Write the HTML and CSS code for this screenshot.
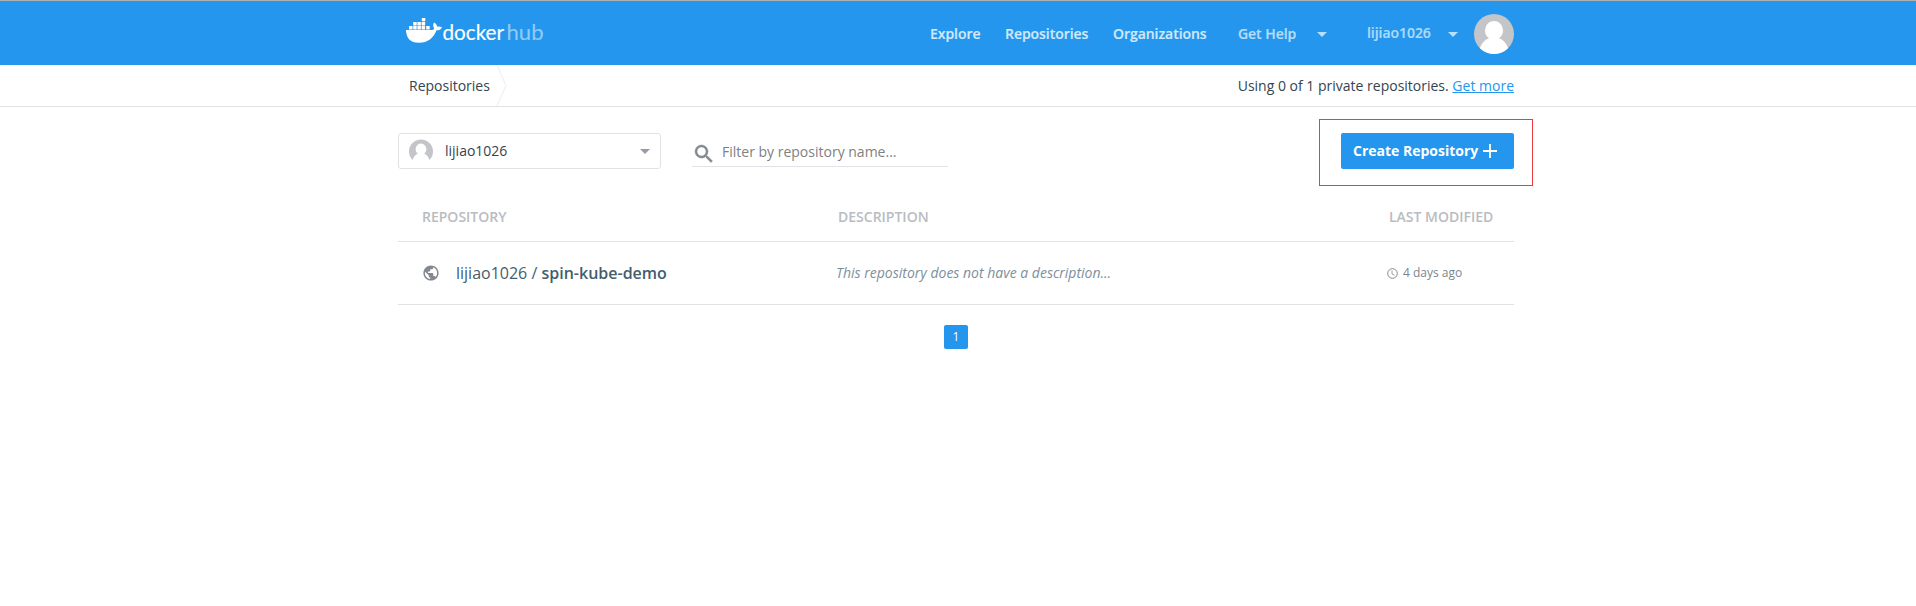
FILE: index.html
```html
<!DOCTYPE html>
<html lang="en">
<head>
<meta charset="utf-8">
<title>Docker Hub</title>
<link rel="stylesheet" href="styles.css">
</head>
<body>
<header class="topbar">
  <div class="container topbar-inner">
    <svg class="logo" width="140" height="32" viewBox="0 0 140 32">
      <g fill="#fff">
        <path d="M0 13H26C27.800 13 28 12 28 11C26.800 9 27 7 28 5.500C29.800 6.500 31 8 31.200 9.700C33 9.400 34.800 9.600 36 10.200C35 12.500 33 13.300 30.500 13.300C27.500 21 22 25.800 13 25.800C4 25.800 .3 21 0 13Z"/>
        <path d="M3 9h3.500v3.500H3zM7.200 9h3.500v3.500H7.200zM11.400 9h3.500v3.500h-3.500zM15.600 9h3.500v3.500h-3.500zM20.200 9h3.500v3.500h-3.500zM7.200 5h3.500v3.500H7.200zM11.400 5h3.500v3.500h-3.500zM15.600 5h3.500v3.500h-3.500zM15.800 1h3.500v3.300h-3.500z"/>
      </g>
      <text class="wordmark" x="36.500" y="23" textLength="61.500" lengthAdjust="spacingAndGlyphs">docker</text>
      <text class="wordmark wordmark-hub" x="100.500" y="23" textLength="37" lengthAdjust="spacingAndGlyphs">hub</text>
    </svg>
    <nav class="nav">
      <a class="nav-explore">Explore</a>
      <a class="nav-repos">Repositories</a>
      <a class="nav-orgs">Organizations</a>
      <a class="nav-help">Get Help</a>
      <svg class="caret" width="10" height="5" viewBox="0 0 10 5"><path d="M0 0h10L5 5z" fill="currentColor"/></svg>
      <a class="nav-user">lijiao1026</a>
      <svg class="caret" width="10" height="5" viewBox="0 0 10 5"><path d="M0 0h10L5 5z" fill="currentColor"/></svg>
      <svg class="avatar" width="40" height="40" viewBox="0 0 40 40">
        <circle cx="20" cy="20" r="20" fill="#c3c5c9"/>
        <path d="M20 7a9 9.500 0 0 1 5 17.300c4.500 1.500 7.800 5.500 9 10A20 20 0 0 1 6 34.300c1.200-4.500 4.500-8.500 9-10A9 9.500 0 0 1 20 7z" fill="#fff"/>
      </svg>
    </nav>
  </div>
</header>
<div class="subbar">
  <div class="container subbar-inner">
    <div class="crumb">Repositories
      <svg width="12" height="41" viewBox="0 0 12 41"><path d="M1 0L10 20.500L1 41" fill="none" stroke="#ebecee"/></svg>
    </div>
    <div class="usage">Using 0 of 1 private repositories. <a class="more">Get more</a></div>
  </div>
</div>
<main class="container">
  <div class="tools">
    <div class="select">
      <svg width="24" height="24" viewBox="0 0 24 24"><path d="M3.500 21A12 12 0 1 1 20.500 21C19.500 18 18 16 15.200 14.800A5.400 5.700 0 1 0 8.800 14.800C6 16 4.500 18 3.500 21z" fill="#c3c5c9"/></svg>
      <span class="select-name">lijiao1026</span>
      <svg width="10" height="5" viewBox="0 0 10 5"><path d="M0 0h10L5 5z" fill="#9a9ba9"/></svg>
    </div>
    <div class="search">
      <svg width="24" height="24" viewBox="0 0 24 24"><path fill="#84888f" stroke="#84888f" stroke-width=".5" d="M15.500 14h-.79l-.28-.27A6.470 6.470 0 0 0 16 9.500 6.500 6.500 0 1 0 9.500 16c1.610 0 3.090-.59 4.230-1.570l.27.28v.79l5 4.990L20.490 19l-4.990-5zm-6 0C7.010 14 5 11.990 5 9.500S7.010 5 9.500 5 14 7.010 14 9.500 11.990 14 9.500 14z"/></svg>
      <span>Filter by repository name...</span>
    </div>
    <div class="highlight">
      <button class="create">Create Repository <svg width="14" height="14" viewBox="0 0 14 14"><path d="M7 0v14M0 7h14" stroke="#fff" stroke-width="1.800"/></svg></button>
    </div>
  </div>
  <div class="row head">
    <div class="c-repo">REPOSITORY</div>
    <div class="c-desc">DESCRIPTION</div>
    <div class="c-date">LAST MODIFIED</div>
  </div>
  <div class="row item">
    <div class="c-repo">
      <svg width="16" height="16" viewBox="1.500 1.500 21 21"><path fill="#84888f" d="M12 2C6.480 2 2 6.480 2 12s4.480 10 10 10 10-4.480 10-10S17.520 2 12 2zm-1 17.930c-3.950-.49-7-3.850-7-7.930 0-.62.080-1.210.21-1.790L9 15v1c0 1.100.9 2 2 2v1.930zm6.900-2.540c-.26-.81-1-1.390-1.900-1.390h-1v-3c0-.55-.45-1-1-1H8v-2h2c.55 0 1-.45 1-1V7h2c1.100 0 2-.9 2-2v-.41c2.930 1.190 5 4.060 5 7.410 0 2.080-.8 3.970-2.100 5.390z"/></svg>
      <span class="repo-name">lijiao1026 / <b>spin-kube-demo</b></span>
    </div>
    <div class="c-desc">This repository does not have a description...</div>
    <div class="c-date">
      <svg width="11" height="11" viewBox="0 0 11 11" fill="none" stroke="#84888f"><circle cx="5.500" cy="5.500" r="4.800"/><path d="M5 2.500V6L7.500 7.200" stroke-width=".8"/></svg>
      <span>4 days ago</span>
    </div>
  </div>
  <div class="pager"><span class="page">1</span></div>
</main>
</body>
</html>
```
FILE: styles.css
```css
* { box-sizing: border-box; }
body { margin: 0; background: #fff; font: 14px/20px "Open Sans", "Noto Sans", sans-serif; color: #33444f; }
svg { display: block; flex: none; }
.container { width: 1116px; margin-left: 398px; }
.topbar { height: 65px; background: #2496ed; border-top: 1px solid #aab0b6; }
.topbar-inner { display: flex; justify-content: space-between; height: 64px; }
.logo { margin: 16px 0 0 8px; }
.wordmark { font: 400 21.5px Lato, sans-serif; fill: #fff; stroke: #fff; stroke-width: .15px; }
.wordmark-hub { fill: #90caf6; stroke: #90caf6; }
.nav { display: flex; align-items: center; height: 66px; font-weight: 600; color: #cfe8fc; white-space: nowrap; -webkit-text-stroke: .2px currentColor; letter-spacing: -.05px; }
.nav-explore { width: 75px; }
.nav-repos { width: 108px; }
.nav-orgs { width: 125px; }
.nav-help { width: 79px; color: #b6ddfa; }
.nav-user { width: 81px; margin: 0 0 3px 40px; color: #aedaf9; }
.caret { color: #b9def9; }
.avatar { margin-left: 16px; }
.subbar { height: 42px; border-bottom: 1px solid #e1e2e6; }
.subbar-inner { display: flex; justify-content: space-between; align-items: center; height: 41px; }
.crumb { display: flex; align-items: center; gap: 6px; padding-left: 11px; }
.more { color: #2496ed; text-decoration: underline; }
.tools { display: flex; height: 67px; margin: 12px -19px 0 0; }
.select { display: flex; align-items: center; width: 263px; height: 36px; margin-top: 14px; padding: 0 10px; border: 1px solid #e1e2e6; border-radius: 3px; }
.select-name { flex: 1; margin-left: 12px; }
.search { display: flex; align-items: center; gap: 6px; width: 256px; height: 31px; margin: 17px 0 0 31px; padding-top: 2px; border-bottom: 1px solid #e1e2e6; color: #7f8082; }
.search svg { margin: 4px 0 0; }
.highlight { width: 214px; height: 67px; margin-left: auto; padding: 13px 0 0 21px; border: 1px solid #f03a3e; }
.create { display: flex; align-items: center; gap: 5px; width: 173px; height: 36px; padding: 0 12px; border: 0; border-radius: 2px; background: #2496ed; color: #fff; font: 700 14px/20px "Open Sans", sans-serif; white-space: nowrap; }
.row { display: flex; align-items: center; border-bottom: 1px solid #e1e2e6; }
.head { height: 56px; padding-top: 7px; color: #b9bcc1; font-weight: 600; }
.item { height: 63px; }
.c-repo { display: flex; align-items: center; width: 438px; padding-left: 24px; }
.item .c-repo { padding-left: 25px; }
.head .c-desc { width: 553px; padding-left: 2px; }
.repo-name { margin-left: 17px; font-size: 16px; color: #445d6e; }
.repo-name b { font-weight: 600; }
.c-desc { width: 551px; }
.item .c-desc { font-style: italic; color: #7c8f9d; }
.item .c-date { display: flex; align-items: center; gap: 5px; font-size: 12px; color: #7a868f; }
.pager { display: flex; justify-content: center; padding: 20px 0 0; }
.page { width: 24px; height: 24px; border-radius: 2px; background: #2496ed; color: #fff; font-size: 12px; line-height: 24px; text-align: center; }
```
